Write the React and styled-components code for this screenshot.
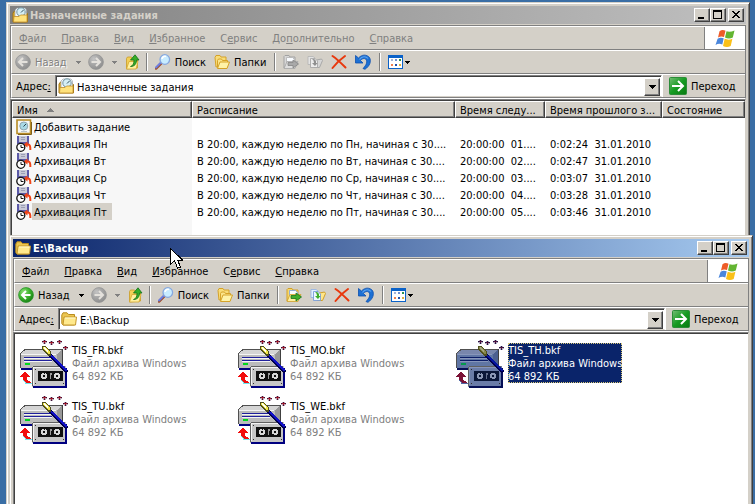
import React, { useId } from "react";
import styled, { createGlobalStyle, css } from "styled-components";

const face = "#d4d0c8";
const shade = "#808080";
const dark = "#404040";

const GlobalStyle = createGlobalStyle`
  * { box-sizing: border-box; }
  body {
    margin: 0;
    font: 11px/13px "DejaVu Sans Condensed", Tahoma, "DejaVu Sans", sans-serif;
    color: #000;
    background: #3a6ea5;
  }
  button, input { font: inherit; color: inherit; }
  button { margin: 0; padding: 0; border: 0; background: none; text-align: left; white-space: nowrap; }
  svg { display: block; flex: none; }
`;

const Desktop = styled.main`
  position: relative;
  height: 100vh;
  overflow: hidden;
  background: #3a6ea5;
`;

const Frame = styled.section`
  position: absolute;
  top: ${(p) => p.$top}px;
  left: ${(p) => p.$left}px;
  right: ${(p) => p.$right}px;
  bottom: -8px;
  display: flex;
  flex-direction: column;
  padding: 2px;
  background: ${face};
  border: 1px solid;
  border-color: ${face} ${dark} ${dark} ${face};
  box-shadow: inset 1px 1px #fff, inset -1px -1px ${shade};
`;

const TitleBar = styled.header`
  display: flex;
  align-items: center;
  height: 18px;
  margin: 1px;
  padding: 0 2px;
  color: ${(p) => (p.$active ? "#fff" : face)};
  background: ${(p) =>
    p.$active
      ? "linear-gradient(90deg, #0a246a, #a6caf0)"
      : "linear-gradient(90deg, #808080, #c0c0c0)"};
`;

const Title = styled.h1`
  flex: 1;
  margin: 2px 0 0 2px;
  font-size: 11px;
  line-height: 16px;
  font-weight: bold;
  white-space: nowrap;
`;

const raised = css`
  background: ${face};
  border: 1px solid;
  border-color: #fff ${dark} ${dark} #fff;
  box-shadow: inset -1px -1px ${shade};
`;

const CaptionButton = styled.button`
  ${raised}
  width: 16px;
  height: 14px;
  color: #000;
  margin-left: ${(p) => (p.$apart ? 2 : 0)}px;
`;

const Rebar = styled.div`
  margin: 0 1px;
  border: 1px solid ${shade};
  border-bottom-color: #fff;
`;

const Band = styled.div`
  display: flex;
  align-items: center;
  height: 24px;
  border-top: 1px solid #fff;
  border-left: 1px solid #fff;
  border-bottom: 1px solid ${shade};
`;

const Menu = styled.nav`
  display: flex;
  flex: 1;
  align-self: stretch;
  border-right: 1px solid ${shade};
`;

const MenuItem = styled.button`
  padding: 0 8px 0 7px;
  color: ${(p) => (p.$dim ? shade : "#000")};
`;

const LogoBox = styled.div`
  display: flex;
  align-items: center;
  justify-content: center;
  align-self: stretch;
  width: 40px;
  background: #fff;
`;

const Tool = styled.button`
  display: flex;
  align-items: center;
  gap: 4px;
  height: 22px;
  padding: 0 ${(p) => (p.$tight ? 1 : p.$pad ?? 4)}px 0 ${(p) => p.$pad ?? 4}px;
  color: ${(p) => (p.disabled ? shade : "#000")};
  text-shadow: ${(p) => (p.disabled ? "1px 1px #fff" : "none")};
`;

const ArrowTool = styled.button`
  display: flex;
  align-items: center;
  height: 22px;
  padding: 0 ${(p) => p.$pad}px;
  color: ${(p) => (p.disabled ? shade : "#000")};
`;

const Rule = styled.span`
  width: 2px;
  height: 18px;
  margin: 0 3px 0 4px;
  border-left: 1px solid ${shade};
  border-right: 1px solid #fff;
`;

const AddressLabel = styled.label`
  width: 43px;
  padding-left: 4px;
  white-space: nowrap;
`;

const Combo = styled.div`
  display: flex;
  align-items: center;
  flex: 1;
  height: 22px;
  padding-left: 2px;
  background: #fff;
  border: 1px solid;
  border-color: ${shade} #fff ${face} ${shade};
  box-shadow: inset 1px 1px ${dark};
`;

const AddressInput = styled.input`
  flex: 1;
  min-width: 0;
  height: 16px;
  margin: 2px 0 0 3px;
  padding: 0;
  border: 0;
  outline: 0;
  background: none;
`;

const DropButton = styled.button`
  ${raised}
  display: flex;
  align-items: center;
  justify-content: center;
  width: 16px;
  height: 18px;
  margin: 1px 1px 0 0;
`;

const Go = styled.button`
  display: flex;
  align-items: center;
  gap: 4px;
  width: 83px;
  height: 22px;
  padding-left: 6px;
  border-left: 1px solid #fff;
`;

const Pane = styled.div`
  flex: 1;
  min-height: 0;
  margin: 0 1px;
  overflow: hidden;
  border: 1px solid;
  border-color: ${shade} ${face} ${face} ${shade};
  box-shadow: inset 1px 1px ${dark};
  padding: 1px 0 0 1px;
  background: ${(p) =>
    p.$sorted ? "linear-gradient(90deg, #f7f7f7 181px, #fff 181px)" : "#fff"};
`;

const Table = styled.table`
  width: 100%;
  table-layout: fixed;
  border-collapse: separate;
  border-spacing: 0;
`;

const HeadCell = styled.th`
  width: ${(p) => (p.$width ? `${p.$width}px` : "auto")};
  height: 17px;
  padding: 1px 0 0 4px;
  font-weight: normal;
  text-align: left;
  white-space: nowrap;
  overflow: hidden;
  ${raised}
`;

const HeadButton = styled.button`
  display: flex;
  align-items: center;
  gap: 9px;
  line-height: 13px;
`;

const Cell = styled.td`
  height: 17px;
  padding: 2px 0 0 5px;
  line-height: 15px;
  white-space: pre;
  overflow: hidden;
`;

const NameCell = styled(Cell)`
  padding: 0 0 0 4px;
`;

const TaskName = styled.div`
  display: flex;
  align-items: center;
  height: 17px;
`;

const TaskLabel = styled.span`
  padding: 3px 5px 1px 2px;
  line-height: 13px;
  background: ${(p) => (p.$selected ? face : "transparent")};
`;

const Tiles = styled.ul`
  display: grid;
  grid-template-columns: repeat(auto-fill, 218px);
  grid-auto-rows: 56px;
  margin: 0;
  padding: 6px 0 0 5px;
  list-style: none;
`;

const Tile = styled.button`
  display: flex;
  align-items: flex-start;
  gap: 4px;
`;

const TileText = styled.span`
  display: flex;
  flex-direction: column;
  margin-top: 3px;
  padding-top: 1px;
  color: ${(p) => (p.$selected ? "#fff" : shade)};
  background: ${(p) => (p.$selected ? "#0a246a" : "transparent")};
  outline: ${(p) => (p.$selected ? "1px dotted #d8c878" : "none")};
  outline-offset: -1px;
`;

const TileName = styled.span`
  color: ${(p) => (p.$selected ? "#fff" : "#000")};
`;

const Pointer = styled.svg`
  position: absolute;
  left: 170px;
  top: 248px;
`;

/* ---------- drawings ---------- */

const MinIcon = () => (
  <svg width="14" height="12" shapeRendering="crispEdges"><path d="M3 8h6v2H3z" /></svg>
);
const MaxIcon = () => (
  <svg width="14" height="12" shapeRendering="crispEdges"><path d="M2 1h9v9H2zM3 3v6h7V3z" fillRule="evenodd" /></svg>
);
const CloseIcon = () => (
  <svg width="14" height="12" shapeRendering="crispEdges">
    <path d="M3 2h2v1h1v1h2V3h1V2h2v1h-1v1H9v1H8v1h1v1h1v1h1v1H9V8H8V7H6v1H5v1H3V8h1V7h1V6h1V5H5V4H4V3H3z" />
  </svg>
);
const Down = ({ size = 5 }) => (
  <svg width={size} height={size === 7 ? 4 : 3} viewBox={size === 7 ? "0 0 7 4" : "0 0 5 3"} shapeRendering="crispEdges">
    <path fill="currentColor" d={size === 7 ? "M0 0h7v1H6v1H5v1H4v1H3V3H2V2H1V1H0z" : "M0 0h5v1H4v1H3v1H2V2H1V1H0z"} />
  </svg>
);
const SortMark = () => (
  <svg width="8" height="4" shapeRendering="crispEdges"><path fill={shade} d="M3 0h1v1h1v1h1v1h1v1H0V3h1V2h1V1h1z" /></svg>
);

function Nav({ forward, on }) {
  const id = useId();
  return (
    <svg width="16" height="16" viewBox="0 0 16 16">
      <defs>
        <radialGradient id={id} cx=".35" cy=".3" r=".8">
          <stop offset="0" stopColor={on ? "#8fe07a" : "#c4c4c4"} />
          <stop offset=".5" stopColor={on ? "#3db32c" : "#a4a4a4"} />
          <stop offset="1" stopColor={on ? "#127812" : "#8a8a8a"} />
        </radialGradient>
      </defs>
      <circle cx="8" cy="8" r="7.4" fill={`url(#${id})`} stroke={on ? "#2b962b" : "#969696"} strokeWidth=".8" />
      <path
        d={forward ? "M3.5 8h8M8 4l4 4-4 4" : "M12.5 8h-8M8 4L4 8l4 4"}
        fill="none" stroke={on ? "#fff" : "#e4e1dc"} strokeWidth="2"
      />
    </svg>
  );
}

const UpIcon = () => (
  <svg width="16" height="16" viewBox="0 0 16 16">
    <path d="M1.500 4.500l1-1.500h4l1 2h5v9l-11 1z" fill="#f2cf57" stroke="#c99a26" strokeWidth=".8" />
    <path d="M1.500 15l2.500-7.500h9L11 15z" fill="#fff0a0" stroke="#d5a62d" strokeWidth=".8" />
    <path d="M5.500 12.500c3-1 3.500-3.500 3.500-6.500H5.500L10 .8 14 6h-2.500c0 4-2 6.500-6 6.500z" fill="#36ad28" stroke="#137218" strokeWidth=".8" />
  </svg>
);
const SearchIcon = () => (
  <svg width="16" height="16" viewBox="0 0 16 16">
    <path d="M1 14.500L6 9.500" stroke="#a04a24" strokeWidth="2.500" strokeLinecap="round" />
    <path d="M1 13.500L5.500 9" stroke="#6c7de0" strokeWidth="2" strokeLinecap="round" />
    <circle cx="9.800" cy="5.500" r="4.800" fill="#c8ecff" stroke="#86a8df" strokeWidth="1.300" />
    <path d="M7 5a3 3 0 0 1 4-2.500" stroke="#fff" strokeWidth="1.600" fill="none" />
  </svg>
);
const FoldersIcon = () => (
  <svg width="16" height="16" viewBox="0 0 16 16">
    <path d="M1 3.500L2 1.500h4l1 1.500h5v8L2 13z" fill="#f8dc78" stroke="#d5a228" />
    <path d="M3.500 6.500L4.500 5h3l1 1.500h5v7H3.500z" fill="#fbe48a" stroke="#d5a228" />
    <path d="M3.500 14.500L6 8h9.500L13 14.500z" fill="#fff3a8" stroke="#d5a228" />
  </svg>
);
const FolderIcon = () => (
  <svg width="16" height="16" viewBox="0 0 16 16">
    <path d="M.8 4L2 1.800h4L7.500 3.500h6V14H2L.8 12.500z" fill="#ecc650" stroke="#b98c1e" />
    <path d="M2 14L3 6h12.500l-1 8z" fill="#ffe98c" stroke="#c4962a" />
    <path d="M4 7h10.500" stroke="#fff9cf" />
  </svg>
);
const MoveIcon = ({ on }) => (
  <svg width="16" height="16" viewBox="0 0 16 16">
    <path d="M1 14V2.500L2 1.500h4L7 3h5v5H5z" fill={on ? "#f6d76b" : "#d8d8d8"} stroke={on ? "#d0a02a" : "#a2a2a2"} />
    <path d="M3.500 3.500h6l2 2V12h-8z" fill="#f8fbff" stroke={on ? "#7aa0dc" : "#b0b0b0"} strokeWidth=".8" />
    <path d="M1 14.500L4 7.500h11L12 14.500z" fill={on ? "#fff0a0" : "#dedede"} stroke={on ? "#d0a02a" : "#a6a6a6"} strokeWidth=".8" />
    <path d="M5 8.500h5V6l5.500 4-5.500 4v-2.500H5z" fill={on ? "#3fae2c" : "#a9a9a9"} stroke={on ? "#16741a" : "#858585"} strokeWidth=".8" />
  </svg>
);
const CopyIcon = ({ on }) => (
  <svg width="16" height="16" viewBox="0 0 16 16">
    <path d="M7 13.500l2.500-7.500 5-1 1 1.500-3 7z" fill={on ? "#ffe68a" : "#d6d6d6"} stroke={on ? "#d0a02a" : "#a8a8a8"} />
    <path d="M1 2.500h5L8 4v6.500H1z" fill={on ? "#e4f0ff" : "#e4e4e4"} stroke={on ? "#8fb0e2" : "#b2b2b2"} strokeWidth=".8" />
    <path d="M3.500 4.500H8l2.500 2.500v6.500h-7z" fill={on ? "#eef6ff" : "#ececec"} stroke={on ? "#6b93d6" : "#a2a2a2"} strokeWidth=".8" />
    <path d="M5 5c3-.5 4.500 1.500 4 4h1.500L8 12 5 9h2C7 7.500 6.500 6 5 5z" fill={on ? "#3fae2c" : "#8f8f8f"} />
  </svg>
);
const DeleteIcon = () => (
  <svg width="16" height="16" viewBox="0 0 16 16">
    <path d="M1.500 2C6 5 10 9 14.500 13.500M14 2C9 5.500 5 9.500 1.500 14" stroke="#e8380d" strokeWidth="2" fill="none" strokeLinecap="round" />
  </svg>
);
const UndoIcon = () => (
  <svg width="16" height="16" viewBox="0 0 16 16">
    <path d="M.5 1.500V9H8L5.500 6.500C7 4.500 9 4 10.500 5c2.500 2 1 6-2.500 9.500l2 .8C15 12 16.500 7 14.500 3.500 12 .5 7 0 3.500 4z" fill="#1c70d4" stroke="#0d4fae" strokeWidth=".8" />
    <path d="M4.500 5.500C7 2 11 2 13 4.500" stroke="#5aa4f2" strokeWidth="1.200" fill="none" />
  </svg>
);
const ViewsIcon = () => (
  <svg width="16" height="16" viewBox="0 0 16 16" shapeRendering="crispEdges">
    <path d="M0 1h15v14H0z" fill="#0b62c8" />
    <path d="M1 4h13v10H1z" fill="#fff" />
    <path d="M3 5h2v2H3z" fill="#a4b4d8" /><path d="M7 5h2v2H7z" fill="#6f8fd0" /><path d="M11 5h2v2h-2z" fill="#2a9050" />
    <path d="M3 10h2v2H3z" fill="#f08050" /><path d="M7 10h2v2H7z" fill="#2050a8" /><path d="M11 10h2v2h-2z" fill="#e0b040" />
  </svg>
);
function GoIcon() {
  const id = useId();
  return (
    <svg width="18" height="18" viewBox="0 0 18 18">
      <defs>
        <linearGradient id={id} x1="0" y1="0" x2="1" y2="1">
          <stop offset="0" stopColor="#74bd74" /><stop offset=".5" stopColor="#169b22" /><stop offset="1" stopColor="#087a10" />
        </linearGradient>
      </defs>
      <rect x=".5" y=".5" width="17" height="17" rx="1" fill={`url(#${id})`} stroke="#2c8c38" />
      <path d="M3 9h11M9 4l5 5-5 5" fill="none" stroke="#fff" strokeWidth="2" />
    </svg>
  );
}
const WinLogo = () => (
  <svg width="20" height="19" viewBox="0 0 20 19">
    <path d="M4.500 2.200Q7.500 0 10.500 1.800L9 8Q6 6.600 3 8.500z" fill="#ee5c28" />
    <path d="M11.500 2.300Q15 3.500 19.500 1.500L17.800 8.500Q14 10.500 10 8.500z" fill="#63b532" />
    <path d="M2.600 9.700Q5.500 7.800 8.700 9.300L7.300 15.500Q4 13.800.5 16z" fill="#4a86dc" />
    <path d="M9.700 9.800Q13.500 11.500 17.400 9.700L15.700 17Q12 19 8 17z" fill="#fac018" />
  </svg>
);
const TasksIcon = () => (
  <svg width="16" height="16" viewBox="0 0 16 16">
    <path d="M1 6l1.500-2H5l1 1.500h8.500l1 1V15H1z" fill="#e5b638" stroke="#a17413" />
    <path d="M3 10V3L5 1h8l1.500 2v7z" fill="#f3f6f8" stroke="#8e98a0" strokeWidth=".6" />
    <circle cx="9" cy="5" r="4.200" fill="#d5eef5" stroke="#71929f" />
    <path d="M9 5.500L11.500 3" stroke="#33525e" />
    <path d="M1.500 15L2 9.500h5L8.500 8H15v7z" fill="#ffe27c" stroke="#c3912a" strokeWidth=".8" />
  </svg>
);
const AddTaskIcon = () => (
  <svg width="16" height="16" viewBox="0 0 16 16">
    <path d="M1 1h13.500v13.500H1z" fill="#f5f7f8" stroke="#b78b25" strokeWidth="1.600" />
    <path d="M2 15.500h13.500V3" fill="none" stroke="#80601c" />
    <circle cx="7.800" cy="7" r="4" fill="#a9d9e6" stroke="#91a5ae" />
    <path d="M7.500 7.500L10 5" stroke="#273f4a" /><path d="M5 12.500h6" stroke="#b9c3ca" />
  </svg>
);
const JobIcon = () => (
  <svg width="16" height="16" viewBox="0 0 16 16">
    <path d="M1 0h12v8H1z" fill="#5b59a8" />
    <path d="M3 0h8v6H3z" fill="#c8cad8" /><path d="M5 1.500h4M5 3.500h4" stroke="#8f93ab" strokeWidth=".8" />
    <path d="M10 8.500h2.500c1.500.5 2 2.500 1.800 5.500" fill="none" stroke="#f04418" strokeWidth="2" /><path d="M7.500 8.500L11.500 5.500v6z" fill="#f04418" />
    <circle cx="4.800" cy="11.300" r="4" fill="#fff" stroke="#111" strokeWidth="1.300" />
    <path d="M5 9v2.500h2.500" fill="none" stroke="#111" />
  </svg>
);

const Spark = ({ x, y, color, core }) => (
  <>
    <path d={`M${x} ${y + 1}h5v2h-5zM${x + 1} ${y}h3v4h-3z`} fill={color} opacity=".35" />
    <path d={`M${x} ${y + 1}h1v1h-1zM${x + 4} ${y + 1}h1v1h-1zM${x + 2} ${y}h1v1h-1zM${x + 2} ${y + 3}h1v1h-1z`} fill={color} />
    <path d={`M${x + 1} ${y + 1}h3v1h-1v1h-1v-1h-1z`} fill={core} />
  </>
);

function BackupIcon({ selected }) {
  const c = selected
    ? { top: "#7886ac", face: "#6076a4", line: "#0a1c66", deep: "#050f55", tape: "#6a7ca8", red: "#7c1236", yel: "#86884a", blue: "#0616a0", led: "#049a4c", lit: "#8796bb", spark: "#201048", core: "#501038", reel: "#8a96b4", win: "#0a1638" }
    : { top: "#d4d4d4", face: "#bcbcbc", line: "#20209c", deep: "#000080", tape: "#c6c6c6", red: "#f20d0d", yel: "#f2e84a", blue: "#1010c8", led: "#00d81c", lit: "#f4f4f4", spark: "#401038", core: "#a01828", reel: "#d8d8d8", win: "#101010" };
  return (
    <svg width="48" height="48" viewBox="0 0 48 48" shapeRendering="crispEdges">
      <path d="M0 14L5 9h37v21H2l-2-2z" fill={c.face} />
      <path d="M1 13L5 9h37l-5 5H1z" fill={c.top} />
      <path d="M.5 28V13.500L5 9.500h37" fill="none" stroke="#505050" />
      <path d="M42.500 9v20" stroke="#404040" />
      <path d="M37 14l5-4v16h-5z" fill={selected ? "#4c6090" : "#989898"} />
      <path d="M1 14.500h35" stroke={c.lit} />
      <path d="M1 29h14" stroke={c.deep} strokeWidth="2" />
      <path d="M4 17h28v1H4zM4 20h28v1H4z" fill={c.line} />
      <path d="M4 18h28v1H4zM4 21h28v1H4z" fill={c.lit} />
      <path d="M5 23h5v2H5z" fill={c.led} />
      <path d="M12 26h34v21H12z" fill={c.tape} />
      <path d="M13.500 45V27.500h31" fill="none" stroke={c.lit} />
      <path d="M12.500 27v19M13 26.500h32" stroke="#606060" fill="none" />
      <path d="M13 46.500h33V28" fill="none" stroke={c.deep} strokeWidth="2" />
      <path d="M15 29h1v1h-1zM43 29h1v1h-1zM15 43h1v1h-1zM43 43h1v1h-1z" fill="#303030" />
      <path d="M18 31h25v10H18z" fill={c.win} />
      <path d="M21 34h1v-1h4v1h1v4h-1v1h-4v-1h-1z" fill={c.reel} />
      <path d="M34 34h1v-1h4v1h1v4h-1v1h-4v-1h-1z" fill={c.reel} />
      <path d="M23 35h2v2h-2zM36 35h2v2h-2zM24 33h1v1h-1zM35 38h1v1h-1z" fill={c.win} />
      <path d="M30 33h2v2h-1v4h-1z" fill={c.reel} opacity=".7" />
      <path d="M29 14L47.500 32" stroke="#000050" strokeWidth="3.500" />
      <path d="M29 13.500L47 31" stroke={c.blue} strokeWidth="2" />
      <path d="M22 6h4l5 6v4h-3l-6-7z" fill="#50501c" />
      <path d="M23 7h3l4 5v2h-2l-5-5z" fill={c.yel} />
      <path d="M24 7h1l3 4-1 1-3-4z" fill={selected ? "#a4a684" : "#fff"} />
      {[[22, 0], [29, 1], [37, 0], [43, 6]].map(([x, y]) => (
        <Spark key={x} x={x} y={y} color={c.spark} core={c.core} />
      ))}
      <path d="M0 37l5-6 5 6H7v3l4 2v1H6l-3-3v-3z" fill={c.red} />
      <path d="M3.500 40.500L6 43.500h5.500" stroke={selected ? "#5068a4" : "#70e8f0"} fill="none" />
    </svg>
  );
}

/* ---------- window parts ---------- */

function MenuLabel({ text }) {
  const [before, key, after] = text.split("_");
  return <>{before}<u>{key}</u>{after}</>;
}

function ExplorerWindow({ id, title, icon, active, menu, top, left, right, children }) {
  const Icon = icon;
  return (
    <Frame $top={top} $left={left} $right={right} aria-labelledby={`${id}-title`}>
      <TitleBar $active={active}>
        <Icon />
        <Title id={`${id}-title`}>{title}</Title>
        <CaptionButton aria-label="Свернуть"><MinIcon /></CaptionButton>
        <CaptionButton aria-label="Развернуть"><MaxIcon /></CaptionButton>
        <CaptionButton aria-label="Закрыть" $apart><CloseIcon /></CaptionButton>
      </TitleBar>
      <Rebar>
        <Band>
          <Menu>
            {menu.map((m) => <MenuItem key={m} $dim={!active}><MenuLabel text={m} /></MenuItem>)}
          </Menu>
          <LogoBox><WinLogo /></LogoBox>
        </Band>
        <Band>
          <Tool $pad={3} disabled={!active}><Nav on={active} />Назад</Tool>
          <ArrowTool $pad={6} disabled={!active} aria-label="История назад"><Down /></ArrowTool>
          <Tool $pad={1} disabled aria-label="Вперёд"><Nav forward /></Tool>
          <ArrowTool $pad={7} disabled aria-label="История вперёд"><Down /></ArrowTool>
          <Tool $pad={1} aria-label="Вверх"><UpIcon /></Tool>
          <Rule />
          <Tool><SearchIcon />Поиск</Tool>
          <Tool><FoldersIcon />Папки</Tool>
          <Rule />
          <Tool disabled={!active} aria-label="Переместить"><MoveIcon on={active} /></Tool>
          <Tool disabled={!active} aria-label="Копировать"><CopyIcon on={active} /></Tool>
          <Tool aria-label="Удалить"><DeleteIcon /></Tool>
          <Tool aria-label="Отменить"><UndoIcon /></Tool>
          <Rule />
          <Tool $tight aria-label="Вид"><ViewsIcon /></Tool>
          <ArrowTool $pad={0} aria-label="Варианты вида"><Down /></ArrowTool>
        </Band>
        <Band>
          <AddressLabel htmlFor={`${id}-address`}>Адрес<u>:</u></AddressLabel>
          <Combo>
            <Icon />
            <AddressInput id={`${id}-address`} defaultValue={title} />
            <DropButton aria-label="Показать список"><Down size={7} /></DropButton>
          </Combo>
          <Go><GoIcon />Переход</Go>
        </Band>
      </Rebar>
      {children}
    </Frame>
  );
}

const tasks = [
  ["Пн", "01", "0:02:24"],
  ["Вт", "02", "0:02:47"],
  ["Ср", "03", "0:03:07"],
  ["Чт", "04", "0:03:28"],
  ["Пт", "05", "0:03:46"],
];

const columns = [
  ["Имя", 180],
  ["Расписание", 263],
  ["Время следу...", 90],
  ["Время прошлого з...", 117],
  ["Состояние", 0],
];

const files = ["TIS_FR.bkf", "TIS_MO.bkf", "TIS_TH.bkf", "TIS_TU.bkf", "TIS_WE.bkf"];

const tasksMenu = ["_Ф_айл", "_П_равка", "_В_ид", "_И_збранное", "С_е_рвис", "До_п_олнительно", "_С_правка"];
const backupMenu = ["_Ф_айл", "_П_равка", "_В_ид", "_И_збранное", "С_е_рвис", "_С_правка"];

function TaskTable() {
  return (
    <Table>
      <thead>
        <tr>
          {columns.map(([name, width], i) => (
            <HeadCell key={name} $width={width} aria-sort={i === 0 ? "ascending" : undefined}>
              <HeadButton>{name}{i === 0 && <SortMark />}</HeadButton>
            </HeadCell>
          ))}
        </tr>
      </thead>
      <tbody>
        <tr>
          <NameCell><TaskName><AddTaskIcon /><TaskLabel>Добавить задание</TaskLabel></TaskName></NameCell>
          <Cell /><Cell /><Cell /><Cell />
        </tr>
        {tasks.map(([day, date, last]) => (
          <tr key={day}>
            <NameCell>
              <TaskName><JobIcon /><TaskLabel $selected={day === "Пт"}>Архивация {day}</TaskLabel></TaskName>
            </NameCell>
            <Cell>В 20:00, каждую неделю по {day}, начиная с 30....</Cell>
            <Cell>{`20:00:00  ${date}....`}</Cell>
            <Cell>{`${last}  31.01.2010`}</Cell>
            <Cell />
          </tr>
        ))}
      </tbody>
    </Table>
  );
}

export default function App() {
  return (
    <Desktop>
      <GlobalStyle />
      <ExplorerWindow id="tasks" title="Назначенные задания" icon={TasksIcon} menu={tasksMenu} active={false} top={2} left={6} right={5}>
        <Pane $sorted><TaskTable /></Pane>
      </ExplorerWindow>
      <ExplorerWindow id="backup" title="E:\Backup" icon={FolderIcon} menu={backupMenu} active top={235} left={9} right={2}>
        <Pane>
          <Tiles>
            {files.map((name) => {
              const selected = name === "TIS_TH.bkf";
              return (
                <li key={name}>
                  <Tile aria-pressed={selected}>
                    <BackupIcon selected={selected} />
                    <TileText $selected={selected}>
                      <TileName $selected={selected}>{name}</TileName>
                      <span>Файл архива Windows</span>
                      <span>64 892 КБ</span>
                    </TileText>
                  </Tile>
                </li>
              );
            })}
          </Tiles>
        </Pane>
      </ExplorerWindow>
      <Pointer width="13" height="21" viewBox="0 0 13 21" shapeRendering="crispEdges" aria-hidden="true">
        <path d="M.5.5v16l4-4 3 7.500 3-1-3-7h5z" fill="#fff" stroke="#000" />
      </Pointer>
    </Desktop>
  );
}
